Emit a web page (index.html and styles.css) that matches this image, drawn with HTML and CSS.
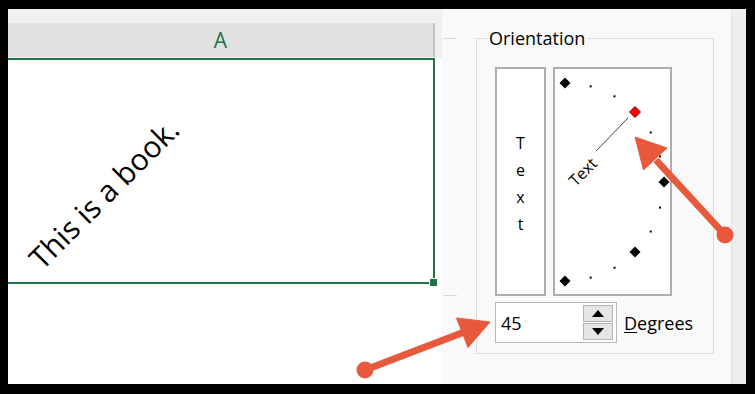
FILE: index.html
```html
<!DOCTYPE html>
<html lang="en">
<head>
    <meta charset="UTF-8"/>
    <title>Orientation</title>
    <link rel="stylesheet" href="styles.css">
</head>
<body>
<div class="frame">
    <!-- sheet -->
    <div class="sheet">
        <div class="sheet-head">
            <div class="col-a">A</div>
        </div>
        <div class="cell">
            <span class="rotated">This is a book.</span>
            <div class="fill-handle"></div>
        </div>
    </div>

    <!-- format cells panel -->
    <div class="panel">
        <div class="panel-main">
            <div class="stub">
                <div class="stub-line"></div>
                <div class="stub-line low"></div>
            </div>
            <fieldset class="group">
                <legend>Orientation</legend>
                <div class="orient-row">
                    <div class="vtext">
                        <span>T</span><span>e</span><span>x</span><span>t</span>
                    </div>
                    <div class="dial">
                        <svg width="115" height="225" viewBox="555 69 115 225">
                            <g fill="#000">
                                <polygon points="565,77.5 570.5,83 565,88.5 559.5,83"/>
                                <polygon points="664,176.5 669.5,182 664,187.5 658.5,182"/>
                                <polygon points="635,246.5 640.5,252 635,257.5 629.5,252"/>
                                <polygon points="565,275.5 570.5,281 565,286.5 559.5,281"/>
                                <rect x="589.6" y="85.4" width="2" height="2"/>
                                <rect x="613.5" y="95.3" width="2" height="2"/>
                                <rect x="649.7" y="131.5" width="2" height="2"/>
                                <rect x="659" y="155.4" width="2" height="2"/>
                                <rect x="659" y="206.6" width="2" height="2"/>
                                <rect x="649.7" y="230.5" width="2" height="2"/>
                                <rect x="613.5" y="266.7" width="2" height="2"/>
                                <rect x="589.6" y="276.6" width="2" height="2"/>
                            </g>
                            <line x1="596" y1="151" x2="628" y2="118" stroke="#444" stroke-width="1"/>
                            <polygon points="635,106.5 640.5,112 635,117.5 629.5,112" fill="#ff0000" stroke="#7a0000" stroke-width="1"/>
                            <text class="dial-text" x="0" y="0" text-anchor="middle" transform="translate(587 176) rotate(-45)">Text</text>
                        </svg>
                    </div>
                </div>
                <div class="degree-row">
                    <div class="spin-input">
                        <span class="spin-value">45</span>
                        <div class="spin-buttons">
                            <div class="spin-btn">
                                <svg width="12" height="7" viewBox="0 0 12 7"><polygon points="6,0 12,7 0,7" fill="#000"/></svg>
                            </div>
                            <div class="spin-btn">
                                <svg width="12" height="7" viewBox="0 0 12 7"><polygon points="0,0 12,0 6,7" fill="#000"/></svg>
                            </div>
                        </div>
                    </div>
                    <span class="deg-label"><u>D</u>egrees</span>
                </div>
            </fieldset>
        </div>
        <div class="panel-strip"></div>
    </div>
</div>

<!-- annotation arrows -->
<svg class="arrows" width="755" height="394" viewBox="0 0 755 394">
    <g fill="#e8593b" stroke="#e8593b">
        <line x1="725" y1="235" x2="656" y2="160" stroke-width="7"/>
        <circle cx="725" cy="235" r="8.5" stroke="none"/>
        <polygon points="635,137 667,148 643.5,170" stroke-width="1" stroke-linejoin="round"/>
        <line x1="365" y1="370" x2="463" y2="332.5" stroke-width="7"/>
        <circle cx="365" cy="370" r="8.5" stroke="none"/>
        <polygon points="490,322 468,347.5 456.5,318" stroke-width="1" stroke-linejoin="round"/>
    </g>
</svg>
</body>
</html>
```

FILE: styles.css
```css
body {
    margin: 0;
    width: 755px;
    height: 394px;
    background-color: #000;
    font-family: "Open Sans", "Noto Sans", sans-serif;
    position: relative;
    overflow: hidden;
}

.frame {
    display: flex;
    width: 738px;
    height: 375px;
    margin: 9px 0 0 8px;
}

/* sheet side */
.sheet {
    width: 434px;
    background-color: #fff;
    display: flex;
    flex-direction: column;
}

.sheet-head {
    height: 49px;
    background-color: #f0f0f0;
}

.col-a {
    width: 425px;
    height: 34px;
    margin-top: 14px;
    background-color: #e1e1e1;
    border-right: 2px solid #c4c4c4;
    color: #217346;
    font-size: 21px;
    line-height: 34px;
    text-align: center;
}

.cell {
    position: relative;
    border-top: 2px solid #217346;
    border-right: 2px solid #217346;
    border-bottom: 2px solid #217346;
    display: flex;
    align-items: flex-end;
    padding: 0 0 8px 37px;
    width: 388px;
    height: 214px;
}

.rotated {
    font-size: 30px;
    line-height: 1;
    color: #000;
    white-space: nowrap;
    transform-origin: left bottom;
    transform: rotate(-45deg);
}

.fill-handle {
    position: absolute;
    right: -5px;
    bottom: -5px;
    width: 7px;
    height: 7px;
    background-color: #217346;
    border: 1px solid #fff;
}

/* panel side */
.panel {
    flex: 1;
    display: flex;
    background-color: #f9f9f9;
}

.panel-main {
    flex: 1;
    display: flex;
}

.panel-strip {
    width: 14px;
    background-color: #efefef;
    border-left: 1px solid #e4e4e4;
}

.stub {
    width: 34px;
    display: flex;
    flex-direction: column;
}

.stub-line {
    width: 14px;
    height: 1px;
    margin: 29px 0 0 1px;
    background-color: #dadada;
}

.stub-line.low {
    margin-top: 256px;
}

.group {
    box-sizing: border-box;
    width: 238px;
    height: 326px;
    margin: 19px 0 0 0;
    padding: 19px 0 9px 10px;
    border: 1px solid #dcdcdc;
    min-width: 0;
}

.group legend {
    padding: 0 2px;
    font-size: 18px;
    line-height: 20px;
    color: #000;
}

.orient-row {
    display: flex;
    gap: 7px;
    height: 229px;
    margin-left: 8px;
}

.vtext {
    box-sizing: border-box;
    width: 51px;
    border: 2px solid #adadad;
    background-color: #fff;
    display: flex;
    flex-direction: column;
    align-items: center;
    justify-content: center;
    padding-top: 4px;
    font-size: 16px;
    line-height: 27px;
    color: #000;
}

.dial {
    box-sizing: border-box;
    width: 119px;
    border: 2px solid #adadad;
    background-color: #fff;
}

.dial svg {
    display: block;
}

.dial-text {
    font-family: "Open Sans", "Noto Sans", sans-serif;
    font-size: 16px;
    fill: #000;
}

.degree-row {
    display: flex;
    align-items: center;
    margin: 6px 0 0 8px;
    height: 41px;
}

.spin-input {
    box-sizing: border-box;
    width: 122px;
    height: 41px;
    border: 1px solid #b9b9b9;
    background-color: #fff;
    display: flex;
    align-items: center;
    padding: 0 3px 0 5px;
}

.spin-value {
    font-size: 18px;
    color: #000;
}

.spin-buttons {
    margin-left: auto;
    display: flex;
    flex-direction: column;
    gap: 1px;
}

.spin-btn {
    box-sizing: border-box;
    width: 30px;
    height: 17px;
    background-color: #e5e5e5;
    border: 1px solid #b4b4b4;
    display: flex;
    align-items: center;
    justify-content: center;
}

.spin-btn svg {
    display: block;
}

.deg-label {
    margin-left: 7px;
    font-size: 18px;
    color: #000;
}

.deg-label u {
    text-decoration-thickness: 1px;
    text-underline-offset: 2px;
}

.arrows {
    position: absolute;
    left: 0;
    top: 0;
    pointer-events: none;
}
```
